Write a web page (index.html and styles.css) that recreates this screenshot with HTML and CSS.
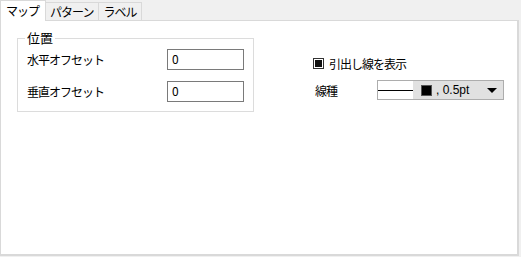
FILE: index.html
```html
<!DOCTYPE html>
<html lang="ja">
<head>
    <meta charset="UTF-8">
    <title>ラベル設定</title>
    <link rel="stylesheet" href="styles.css">
</head>
<body>

<ul class="tabs">
  <li class="tab active">マップ</li>
  <li class="tab">パターン</li>
  <li class="tab">ラベル</li>
</ul>

<div class="panel">
    <!-- 位置 group -->
    <fieldset class="group">
        <legend>位置</legend>
        <div class="row">
            <label>水平オフセット</label>
            <div class="textbox">0</div>
        </div>
        <div class="row">
            <label>垂直オフセット</label>
            <div class="textbox">0</div>
        </div>
    </fieldset>

    <div class="side">
        <div class="check-row">
            <span class="checkbox"><span class="mark"></span></span>
            <span>引出し線を表示</span>
        </div>
        <div class="line-row">
            <label>線種</label>
            <div class="combo">
                <span class="swatch-line"><span class="stroke"></span></span>
                <span class="swatch-box"></span>
                <span class="combo-text">, 0.5pt</span>
                <span class="arrow"></span>
            </div>
        </div>
    </div>
</div>

</body>
</html>
```

FILE: styles.css
```css
body {
    margin: 0;
    background-color: #f0f0f0;
    font-family: "Noto Sans CJK JP", "Liberation Sans", sans-serif;
    font-size: 12px;
    letter-spacing: -1px;
    color: #000;
    width: 521px;
    height: 257px;
    overflow: hidden;
}

.tabs {
    list-style-type: none;
    margin: 0;
    padding: 0 0 0 1px;
    display: flex;
    height: 20px;
    align-items: flex-end;
}

.tab {
    height: 18px;
    line-height: 17px;
    padding: 0 5px 0 4px;
    border: 1px solid #d9d9d9;
    border-bottom: none;
    border-left: none;
    box-sizing: border-box;
    background-color: #f0f0f0;
}

.tab.active {
    height: 21px;
    line-height: 20px;
    background-color: #fff;
    border-left: 1px solid #d9d9d9;
    margin-bottom: -1px;
    position: relative;
    z-index: 1;
    padding: 0 6px 0 5px;
    margin-left: -1px;
}

.panel {
    width: 519px;
    height: 236px;
    box-sizing: border-box;
    background-color: #fff;
    border: 1px solid #d9d9d9;
    border-bottom-width: 2px;
    border-right-width: 2px;
    display: flex;
    padding: 9px 0 0 16px;
}

.group {
    margin: 0;
    width: 237px;
    height: 82px;
    box-sizing: border-box;
    border: 1px solid #dcdcdc;
    padding: 3px 9px 0 9px;
}

.group legend {
    padding: 0 2px;
    margin-left: -2px;
    line-height: 16px;
    font-size: 13px;
    letter-spacing: 0;
}

.row {
    display: flex;
    align-items: center;
    justify-content: space-between;
    height: 21px;
    margin-bottom: 11px;
}

.textbox {
    width: 77px;
    height: 21px;
    box-sizing: border-box;
    border: 1px solid #7a7a7a;
    padding: 0 4px;
    line-height: 17px;
    letter-spacing: 0;
}

.side {
    margin-left: 61px;
    padding-top: 25px;
}

.check-row {
    display: flex;
    align-items: center;
    gap: 5px;
    height: 16px;
    margin-left: -2px;
}

.checkbox {
    width: 11px;
    height: 11px;
    box-sizing: border-box;
    border: 1px solid #333;
    background: #fff;
    display: flex;
    align-items: center;
    justify-content: center;
}

.checkbox .mark {
    width: 7px;
    height: 7px;
    background-color: #111;
}

.line-row {
    display: flex;
    align-items: center;
    margin-top: 9px;
}

.line-row label {
    width: 62px;
}

.combo {
    width: 127px;
    height: 20px;
    box-sizing: border-box;
    border: 1px solid #adadad;
    background-color: #e1e1e1;
    display: flex;
    align-items: center;
    letter-spacing: 0;
}

.swatch-line {
    width: 35px;
    height: 18px;
    background: #fff;
    display: flex;
    align-items: center;
}

.swatch-line .stroke {
    width: 100%;
    height: 1px;
    background: #000;
}

.swatch-box {
    width: 11px;
    height: 11px;
    box-sizing: border-box;
    border: 1px solid #555;
    background: #000;
    margin-left: 8px;
}

.combo-text {
    margin-left: 4px;
    font-family: "Liberation Sans", sans-serif;
    flex: 1;
}

.arrow {
    width: 0;
    height: 0;
    border-left: 5px solid transparent;
    border-right: 5px solid transparent;
    border-top: 5px solid #000;
    margin-right: 6px;
}
```
